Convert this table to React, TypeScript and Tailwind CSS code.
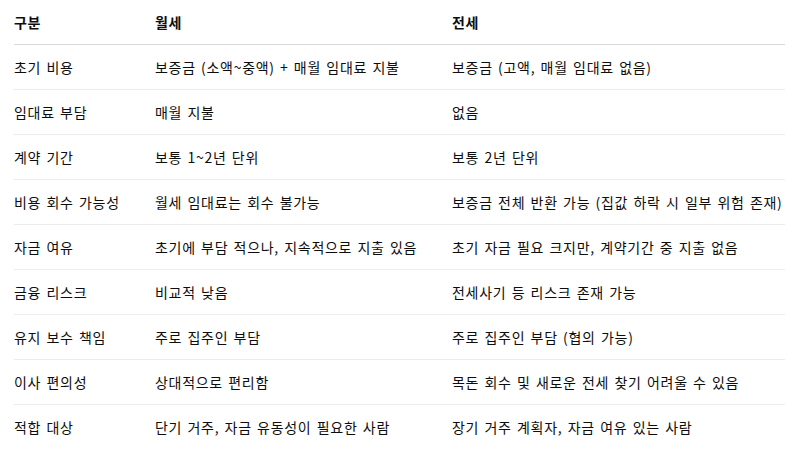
const rows: [string, string, string][] = [
  ["초기 비용", "보증금 (소액~중액) + 매월 임대료 지불", "보증금 (고액, 매월 임대료 없음)"],
  ["임대료 부담", "매월 지불", "없음"],
  ["계약 기간", "보통 1~2년 단위", "보통 2년 단위"],
  ["비용 회수 가능성", "월세 임대료는 회수 불가능", "보증금 전체 반환 가능 (집값 하락 시 일부 위험 존재)"],
  ["자금 여유", "초기에 부담 적으나, 지속적으로 지출 있음", "초기 자금 필요 크지만, 계약기간 중 지출 없음"],
  ["금융 리스크", "비교적 낮음", "전세사기 등 리스크 존재 가능"],
  ["유지 보수 책임", "주로 집주인 부담", "주로 집주인 부담 (협의 가능)"],
  ["이사 편의성", "상대적으로 편리함", "목돈 회수 및 새로운 전세 찾기 어려울 수 있음"],
  ["적합 대상", "단기 거주, 자금 유동성이 필요한 사람", "장기 거주 계획자, 자금 여유 있는 사람"],
]

export default function App() {
  return (
    <main className="min-h-screen bg-white pl-[14px] pr-[18px] text-[14px] tracking-[0.7px] [word-spacing:1.5px] text-[#0d0d0d] font-['Noto_Sans_CJK_KR',_'Noto_Sans',_sans-serif]">
      <div className="grid grid-cols-[141px_297px_1fr] h-[45px] items-center border-b border-[#d9d9d9] font-bold">
        <div>구분</div>
        <div>월세</div>
        <div>전세</div>
      </div>
      {rows.map((r, i) => (
        <div
          key={r[0]}
          className={
            "grid grid-cols-[141px_297px_1fr] h-[45px] items-center whitespace-nowrap " +
            (i < rows.length - 1 ? "border-b border-[#ececec]" : "")
          }
        >
          <div>{r[0]}</div>
          <div>{r[1]}</div>
          <div>{r[2]}</div>
        </div>
      ))}
    </main>
  )
}
